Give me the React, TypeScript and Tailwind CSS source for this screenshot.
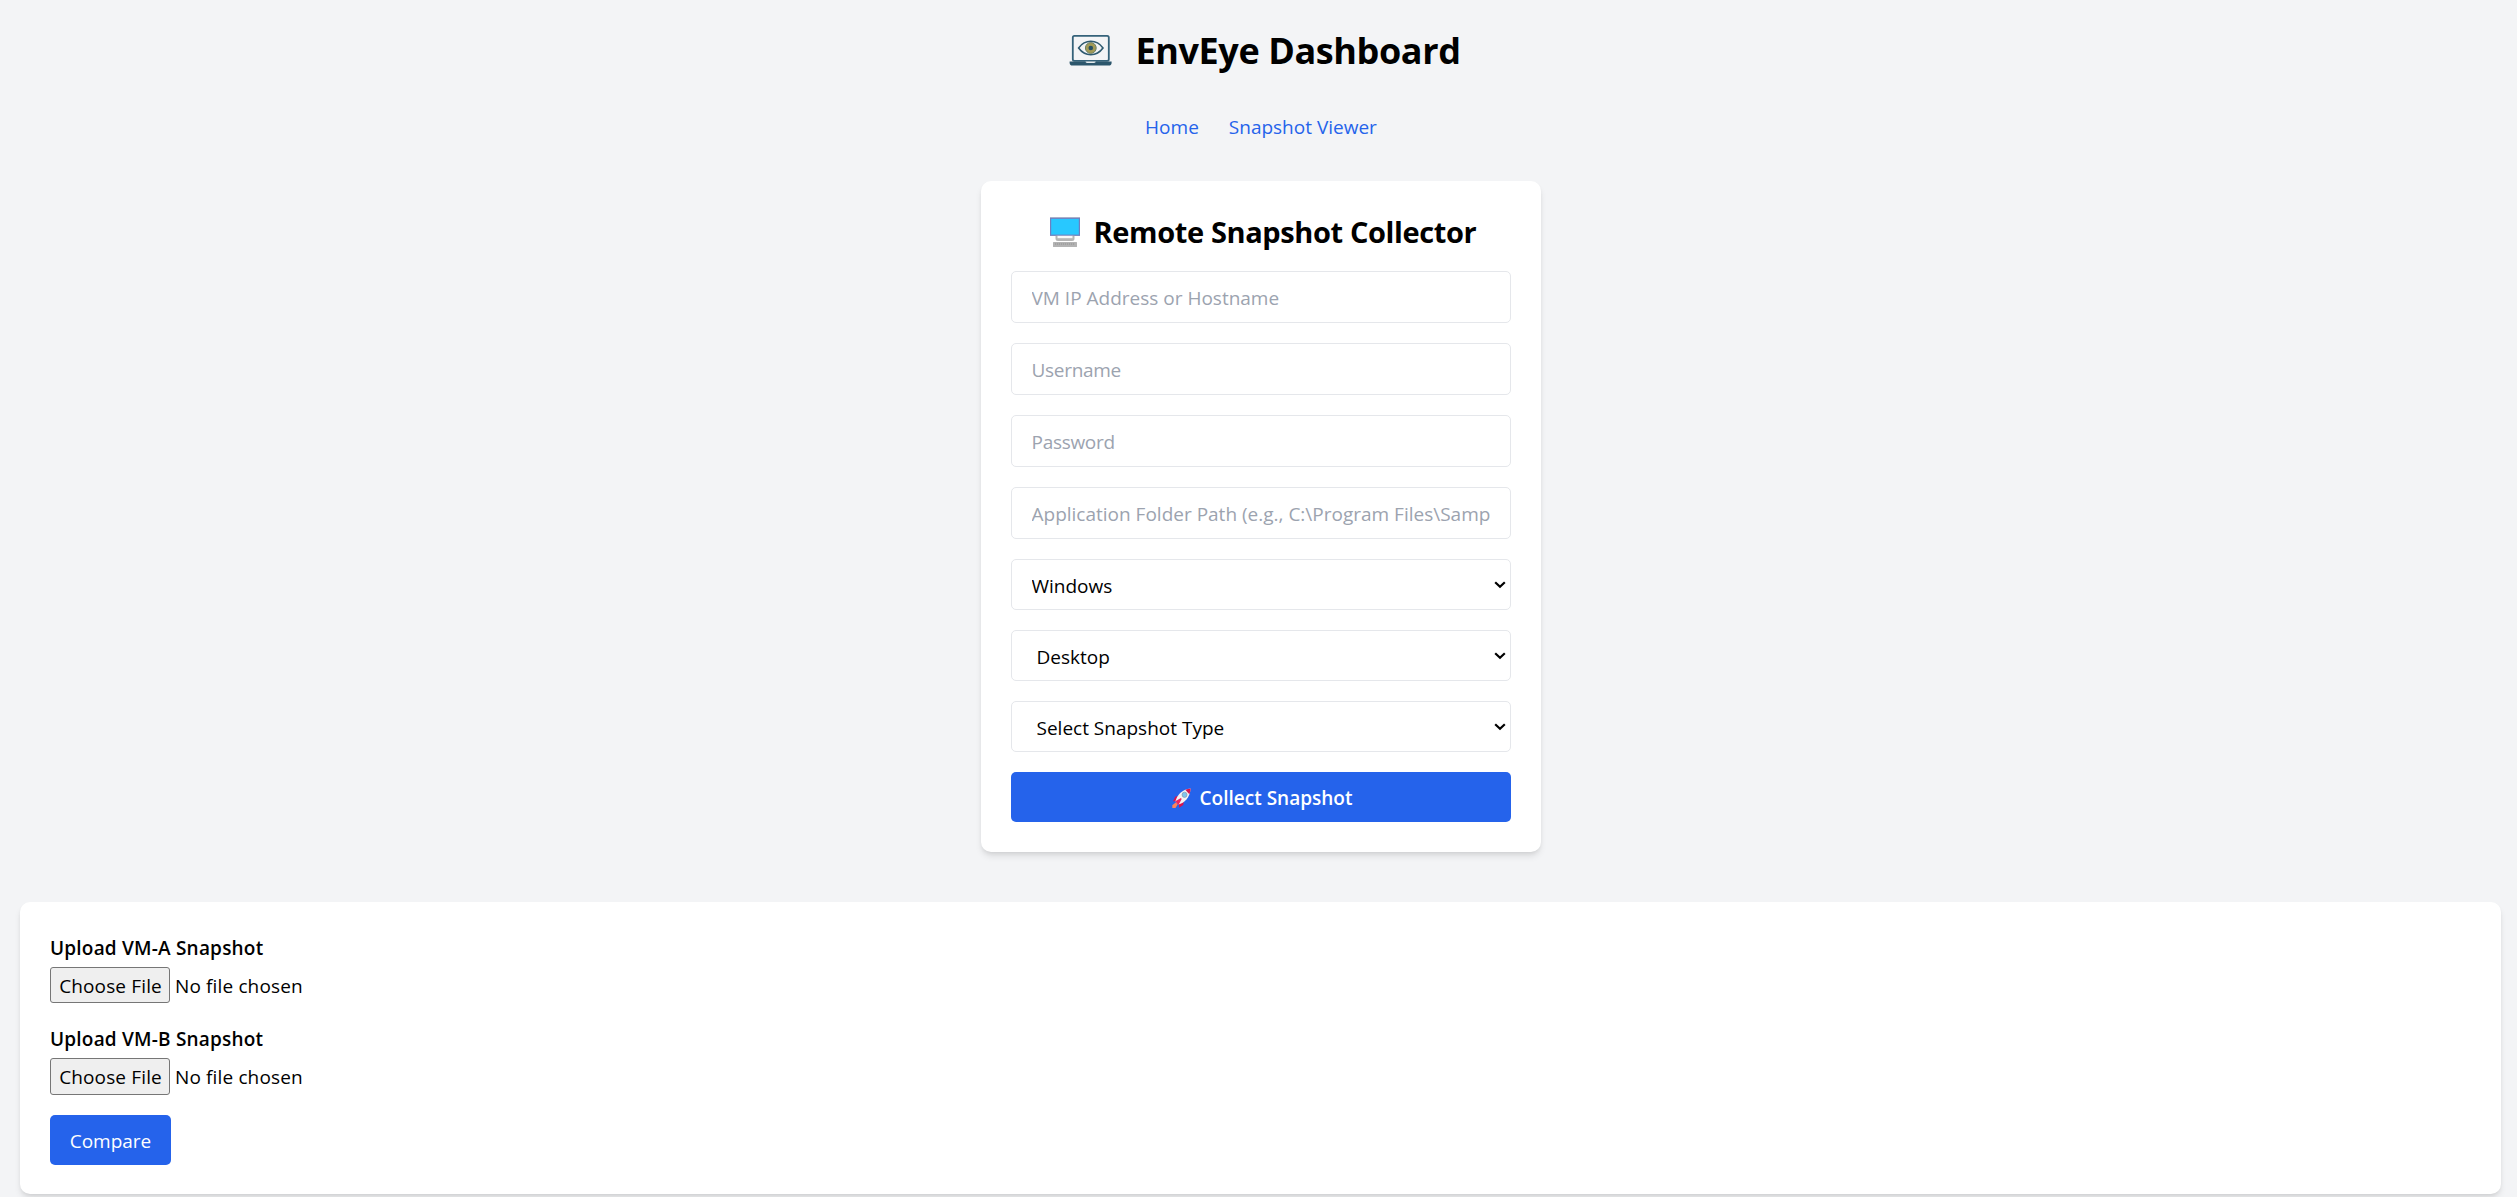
import type { ReactNode } from "react";

function LaptopEyeLogo() {
  return (
    <svg className="h-[60px] w-[60px] shrink-0" viewBox="0 0 60 60" fill="none">
      <rect x="12.8" y="15.8" width="36" height="25" rx="1.6" stroke="#35627a" strokeWidth="1.8" />
      <path d="M9.6 41.6H51.6V43C51.6 44.7 50.3 45.6 48.8 45.6H12.4C10.9 45.6 9.6 44.7 9.6 43Z" fill="#2c566c" />
      <path d="M25.5 41.6H35.7C35.4 42.8 34.8 43 34 43H27.2C26.4 43 25.8 42.8 25.5 41.6Z" fill="#e5ebee" />
      <path d="M18.6 28C21.8 23.6 26 21.3 30.8 21.3S39.8 23.6 43 28C39.8 32.4 35.6 34.7 30.8 34.7S21.8 32.4 18.6 28Z" stroke="#2f5a70" strokeWidth="1.6" />
      <circle cx="30.8" cy="28" r="5.4" fill="#a39b57" stroke="#6b7f68" strokeWidth="1" />
      <circle cx="30.8" cy="28" r="2.3" fill="#274f63" />
    </svg>
  );
}

function MonitorIcon() {
  return (
    <svg className="h-[30px] w-[30px] shrink-0" viewBox="0 0 30 30">
      <rect x="0" y="0" width="30" height="19" fill="#c3c6ce" />
      <rect x="0.6" y="1.3" width="28.8" height="16.9" fill="#28c8ff" stroke="#6f7fc0" strokeWidth="1.2" />
      <path d="M5.5 18.8H8V21H22V18.8H24.5V21.5Q24.5 24 22 24H8Q5.5 24 5.5 21.5Z" fill="#b5b5b5" />
      <rect x="7.5" y="18.8" width="15" height="2.4" fill="#f8f8f8" />
      <rect x="3" y="25" width="24" height="5" rx="0.5" fill="#b3b3b3" />
      <path d="M5 27H25" stroke="#8f8f8f" strokeWidth="1" strokeDasharray="1.2 0.8" />
    </svg>
  );
}

function RocketIcon() {
  return (
    <svg className="h-5 w-[19px] shrink-0" viewBox="0 0 20 20" preserveAspectRatio="none">
      <path d="M4.2 14.2L0.3 17.2V20H3.6L6 16.6Z" fill="#ff8257" />
      <path d="M7.6 7.6L3.4 8.8L1 13.4L5.4 12.6Z" fill="#d8134f" />
      <path d="M12.6 12.4L11.8 17L7.4 19.8L7.4 15Z" fill="#d8134f" />
      <path d="M3.6 13.2C5.2 7.4 10 1.4 19.6 0.4C19 9.8 12.8 14.8 6.8 16.6Z" fill="#f4f1f4" />
      <path d="M14 1.8C15.8 0.9 17.6 0.5 19.6 0.4C19.5 2.6 19 4.6 18.3 6.2Z" fill="#d8134f" />
      <path d="M3.4 13.2L9.4 10L10.2 11L6.8 17Z" fill="#f0245f" />
      <circle cx="13.2" cy="6.8" r="2.6" fill="#7fc4ee" stroke="#8a9bb0" strokeWidth="0.8" />
    </svg>
  );
}

function Chevron() {
  return (
    <svg className="pointer-events-none absolute top-[22px] right-[5px] h-2 w-3" viewBox="0 0 12 8" fill="none">
      <path d="M1.2 1.2L6 5.8L10.8 1.2" stroke="#000" strokeWidth="2.2" />
    </svg>
  );
}

function TextField({ placeholder, type = "text", tracking = "" }: { placeholder: string; type?: string; tracking?: string }) {
  return (
    <input
      type={type}
      placeholder={placeholder}
      className={`block h-[52px] w-full rounded-[5px] border border-[#e5e7eb] bg-white px-5 pt-px placeholder:text-[#9ca3af] ${tracking}`}
    />
  );
}

function SelectField({ value, indent, options }: { value: string; indent: string; options: string[] }) {
  return (
    <div className="relative">
      <select
        defaultValue={value}
        className={`block h-[51px] w-full appearance-none rounded-[5px] border border-[#e5e7eb] bg-white pt-0.5 ${indent}`}
      >
        {options.map((o) => (
          <option key={o}>{o}</option>
        ))}
      </select>
      <Chevron />
    </div>
  );
}

function FileField({ label, height }: { label: string; height: string }) {
  return (
    <label className="block">
      <span className="block h-[30px] leading-[30px] font-semibold tracking-[0.2px]">{label}</span>
      <span className="mt-1 flex items-center tracking-[0.14px]">
        <span className={`flex w-[120px] items-center justify-center rounded-[3px] border border-[#767676] bg-[#efefef] pt-px pl-px ${height}`}>
          Choose File
        </span>
        <span className="ml-[5px] pt-px">No file chosen</span>
      </span>
    </label>
  );
}

function Card({ className, children }: { className: string; children: ReactNode }) {
  return (
    <div className={`rounded-[10px] bg-white shadow-[0_5px_7.5px_-1px_rgba(0,0,0,0.1),0_2.5px_5px_-2.5px_rgba(0,0,0,0.1)] ${className}`}>
      {children}
    </div>
  );
}

export default function App() {
  return (
    <div className="h-[1197px] overflow-hidden bg-[#f3f4f6] pt-5 pr-4 pl-5 font-['Open_Sans','Noto_Sans',sans-serif] text-[19px] leading-[30px] text-black">
      <header className="flex h-[60px] items-center justify-center gap-[15px]">
        <LaptopEyeLogo />
        <h1 className="pt-px text-[36px] leading-[45px] font-bold tracking-[-0.4px]">EnvEye Dashboard</h1>
      </header>

      <nav className="mt-8 flex justify-center gap-[30px] pl-px text-[#2563eb]">
        <a href="#home">Home</a>
        <a href="#viewer">Snapshot Viewer</a>
      </nav>

      <Card className="mx-auto mt-[39px] h-[671px] w-[560px] p-[30px]">
        <h2 className="mb-5 flex h-10 items-center justify-center gap-[14px] pt-0.5 pl-[5px] text-[29px] leading-10 font-bold tracking-[-0.38px]">
          <MonitorIcon />
          Remote Snapshot Collector
        </h2>
        <form className="flex flex-col gap-5">
          <TextField placeholder="VM IP Address or Hostname" />
          <TextField placeholder="Username" tracking="tracking-[-0.3px]" />
          <TextField placeholder="Password" type="password" tracking="tracking-[-0.3px]" />
          <TextField placeholder="Application Folder Path (e.g., C:\Program Files\SampleApp)" />
          <SelectField value="Windows" indent="pl-5" options={["Windows", "Linux"]} />
          <SelectField value="Desktop" indent="pl-[25px]" options={["Desktop", "Web"]} />
          <SelectField value="Select Snapshot Type" indent="pl-[25px]" options={["Select Snapshot Type", "Full"]} />
          <button type="button" className="flex h-[50px] items-center justify-center gap-[9px] rounded-[5px] bg-[#2563eb] pt-px pl-[3px] font-semibold text-white">
            <RocketIcon />
            Collect Snapshot
          </button>
        </form>
      </Card>

      <Card className="mt-[50px] h-[292px] px-[30px] pt-[31px]">
        <FileField label="Upload VM-A Snapshot" height="h-9" />
        <div className="mt-[21px]">
          <FileField label="Upload VM-B Snapshot" height="h-[37px]" />
        </div>
        <button type="button" className="mt-5 h-[50px] w-[121px] rounded-[5px] bg-[#2563eb] pt-px text-white">
          Compare
        </button>
      </Card>
    </div>
  );
}
